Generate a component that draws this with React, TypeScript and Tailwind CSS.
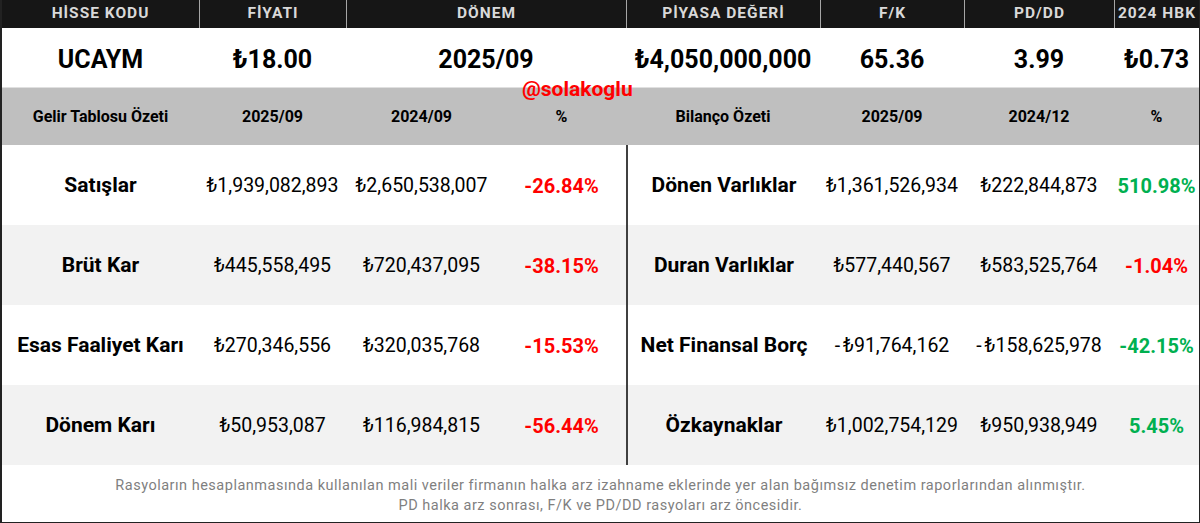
import React from 'react';

const font = { fontFamily: 'Roboto, "Liberation Sans", sans-serif' };

const heads = [
  { label: 'HİSSE KODU', value: 'UCAYM', span: 'col-span-1' },
  { label: 'FİYATI', value: '₺18.00', span: 'col-span-1' },
  { label: 'DÖNEM', value: '2025/09', span: 'col-span-2' },
  { label: 'PİYASA DEĞERİ', value: '₺4,050,000,000', span: 'col-span-1' },
  { label: 'F/K', value: '65.36', span: 'col-span-1' },
  { label: 'PD/DD', value: '3.99', span: 'col-span-1' },
  { label: '2024 HBK', value: '₺0.73', span: 'col-span-1' },
];

const sub = ['Gelir Tablosu Özeti', '2025/09', '2024/09', '%', 'Bilanço Özeti', '2025/09', '2024/12', '%'];

type Side = [string, string, string, string, boolean];

const rows: { left: Side; right: Side }[] = [
  {
    left: ['Satışlar', '₺1,939,082,893', '₺2,650,538,007', '-26.84%', false],
    right: ['Dönen Varlıklar', '₺1,361,526,934', '₺222,844,873', '510.98%', true],
  },
  {
    left: ['Brüt Kar', '₺445,558,495', '₺720,437,095', '-38.15%', false],
    right: ['Duran Varlıklar', '₺577,440,567', '₺583,525,764', '-1.04%', false],
  },
  {
    left: ['Esas Faaliyet Karı', '₺270,346,556', '₺320,035,768', '-15.53%', false],
    right: ['Net Finansal Borç', '-₺91,764,162', '-₺158,625,978', '-42.15%', true],
  },
  {
    left: ['Dönem Karı', '₺50,953,087', '₺116,984,815', '-56.44%', false],
    right: ['Özkaynaklar', '₺1,002,754,129', '₺950,938,949', '5.45%', true],
  },
];

const cols = 'grid grid-cols-[197px_147px_151px_129px_194px_144px_150px_1fr]';

// negative money: keep a little air between the minus and the lira sign
const Money = ({ v }: { v: string }) =>
  v.startsWith('-') ? (
    <span>
      <span className="mr-[3px]">-</span>
      {v.slice(1)}
    </span>
  ) : (
    <span>{v}</span>
  );

const Cells = ({ side, divider }: { side: Side; divider?: boolean }) => (
  <>
    <div className={`flex items-center justify-center pt-[2px] text-[21px] font-bold text-black ${divider ? 'border-l-2 border-[#404040]' : ''}`}>
      {side[0]}
    </div>
    <div className="flex items-center justify-center pt-[2px] text-[19.5px] text-black">
      <Money v={side[1]} />
    </div>
    <div className="flex items-center justify-center pt-[2px] text-[19.5px] text-black">
      <Money v={side[2]} />
    </div>
    <div className={`flex items-center justify-center pt-[2px] text-[20px] font-bold ${side[4] ? 'text-[#00b050]' : 'text-[#ff0000]'}`}>
      {side[3]}
    </div>
  </>
);

export default function App() {
  return (
    <div style={font} className="relative w-[1200px] h-[523px] overflow-hidden bg-white border-l-2 border-r border-b border-[#222]">
      <div className={`${cols} h-[28px] bg-[#161616]`}>
        {heads.map((h, i) => (
          <div
            key={h.label}
            className={`${h.span} flex items-center justify-center text-[15.5px] font-bold tracking-[1px] text-[#d9d9d9] ${i > 0 ? 'border-l border-[#a6a6a6]' : ''}`}
          >
            {h.label}
          </div>
        ))}
      </div>

      <div className={`${cols} h-[59px]`}>
        {heads.map((h) => (
          <div key={h.label} className={`${h.span} flex items-center justify-center pt-[5px] text-[25px] font-bold text-black`}>
            {h.value}
          </div>
        ))}
      </div>

      <div className={`${cols} h-[58px] bg-[#bfbfbf] border-t border-[#e0e0e0]`}>
        {sub.map((s, i) => (
          <div key={i} className="flex items-center justify-center pt-[1px] text-[16px] font-bold text-black">
            {s}
          </div>
        ))}
      </div>

      {rows.map((r, i) => (
        <div key={i} className={`${cols} h-[80px] ${i % 2 ? 'bg-[#f2f2f2]' : 'bg-white'}`}>
          <Cells side={r.left} />
          <Cells side={r.right} divider />
        </div>
      ))}

      <div className="flex flex-col items-center pt-[11px] text-[14.5px] leading-[20px] tracking-[0.5px] text-[#7f7f7f]">
        <p>Rasyoların hesaplanmasında kullanılan mali veriler firmanın halka arz izahname eklerinde yer alan bağımsız denetim raporlarından alınmıştır.</p>
        <p>PD halka arz sonrası, F/K ve PD/DD rasyoları arz öncesidir.</p>
      </div>

      <div className="absolute left-[520px] top-[74px] text-[21px] font-bold text-[#ff0000]">@solakoglu</div>
    </div>
  );
}
